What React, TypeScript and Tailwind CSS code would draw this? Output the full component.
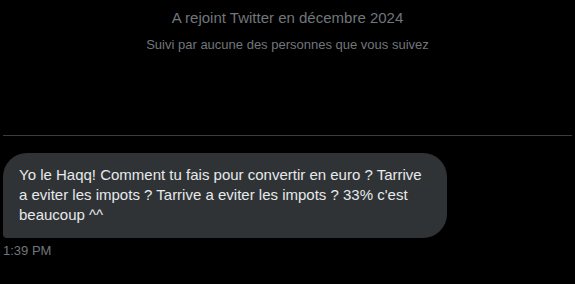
export default function App() {
  return (
    <div
      className="h-[284px] w-[575px] overflow-hidden bg-black text-[#e7e9ea]"
      style={{ fontFamily: '"Liberation Sans", Arial, sans-serif' }}
    >
      {/* Profile footer */}
      <div className="flex flex-col items-center pt-[8px] text-[#71767b]">
        <p className="text-[15px] leading-[20px]">A rejoint Twitter en décembre 2024</p>
        <p className="mt-[9px] text-[13px] leading-[16px]">Suivi par aucune des personnes que vous suivez</p>
      </div>

      <div className="mx-[3px] mt-[82px] h-px bg-[#3a3d40]" />

      {/* Message */}
      <div className="px-[3px] pt-[17px]">
        <div className="w-[444px] rounded-[24px] rounded-bl-[4px] bg-[#2f3336] px-4 pt-3 pb-[13px] text-[15px] leading-[20px]">
          Yo le Haqq! Comment tu fais pour convertir en euro ? Tarrive a eviter les impots ? Tarrive a eviter les
          impots ? 33% c'est beaucoup ^^
        </div>
        <p className="mt-[5px] text-[13px] leading-[16px] text-[#71767b]">1:39 PM</p>
      </div>
    </div>
  )
}
